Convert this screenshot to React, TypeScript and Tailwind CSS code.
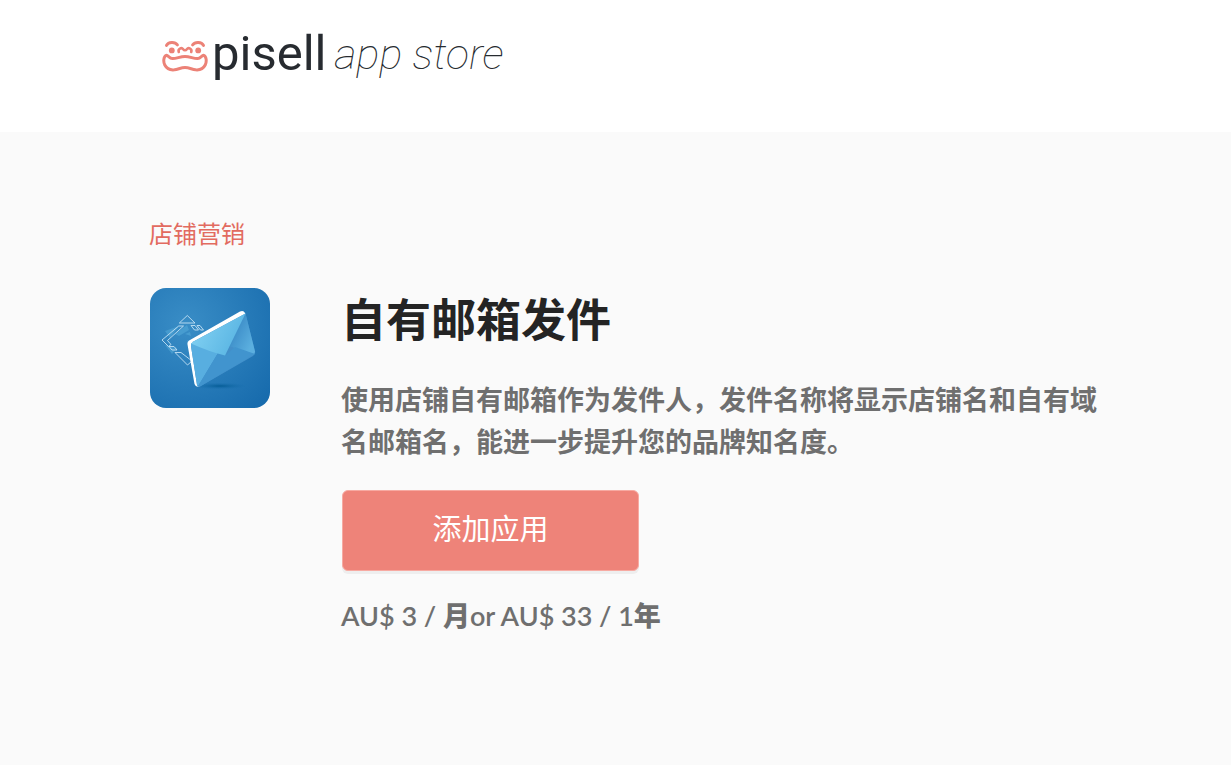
import React from 'react';

const app = {
  category: '店铺营销',
  name: '自有邮箱发件',
  description: '使用店铺自有邮箱作为发件人，发件名称将显示店铺名和自有域名邮箱名，能进一步提升您的品牌知名度。',
  monthly: 'AU$ 3',
  yearly: 'AU$ 33',
};

const PisellMark = () => (
  <svg width="46" height="36" viewBox="0 -4 46 36" fill="none" stroke="#ec8277" strokeWidth="3" strokeLinecap="round" strokeLinejoin="round" aria-hidden="true">
    <path d="M4.500 5.400C6.400 1.600 13 1.600 15.400 4.800" />
    <path d="M30.600 4.800C33 1.600 39.600 1.600 41.500 5.400" />
    <path d="M16.800 12C15.600 8.600 19.600 7.200 21.200 9.200C22.200 10.600 23.800 10.600 24.800 9.200C26.400 7.200 30.400 8.600 29.200 12" strokeWidth="2.6" />
    <circle cx="9.800" cy="10.400" r="2.900" fill="#ec8277" stroke="none" />
    <circle cx="36.200" cy="10.400" r="2.900" fill="#ec8277" stroke="none" />
    <path d="M4.200 15.400C6 14.800 7.200 18.400 10.400 18.600C14.400 18.800 18 16.400 23 16.400C28 16.400 31.600 18.800 35.600 18.600C38.800 18.400 40 14.800 41.800 15.400C44.600 16.600 44.800 21.800 43.200 25C41.200 28.800 37.400 30.200 33.600 29.800C29.600 29.200 27 27.600 23 27.600C19 27.600 16.400 29.200 12.400 29.800C8.600 30.200 4.800 28.800 2.800 25C1.200 21.800 1.400 16.600 4.200 15.400Z" />
  </svg>
);

const MailIcon = () => (
  <svg className="block size-[120px] rounded-2xl" viewBox="0 0 120 120" fill="none" role="img" aria-label={app.name}>
    <defs>
      <radialGradient id="bg" cx="0.3" cy="0.3" r="0.95">
        <stop stopColor="#398dc6" />
        <stop offset="1" stopColor="#166aac" />
      </radialGradient>
      <linearGradient id="flap" x1="50" y1="40" x2="90" y2="60" gradientUnits="userSpaceOnUse">
        <stop stopColor="#7ccdf0" />
        <stop offset="1" stopColor="#57b3e2" />
      </linearGradient>
      <linearGradient id="side" x1="78" y1="44" x2="102" y2="56" gradientUnits="userSpaceOnUse">
        <stop stopColor="#3787c4" />
        <stop offset="1" stopColor="#5bafdf" />
      </linearGradient>
      <radialGradient id="shadow">
        <stop stopColor="#055d96" />
        <stop offset="1" stopColor="#1a70b0" stopOpacity="0" />
      </radialGradient>
    </defs>
    <rect width="120" height="120" fill="url(#bg)" />
    <ellipse cx="70" cy="98" rx="28" ry="3.5" fill="url(#shadow)" />
    {/* arrows behind the envelope */}
    <g fill="#58aedb" fillOpacity="0.5">
      <path d="M15 43L29 38L20 50ZM25 46L37 37L39 42L29 48ZM15 57L27 60L22 66Z" />
      <path d="M35 46L40 44L41 48ZM37 52L42 56L38 57Z" />
    </g>
    <g stroke="#c3e1f4" strokeWidth="0.9" strokeLinejoin="round">
      <path d="M37.300 27.500L45 35H29.300Z" />
      <path d="M28.700 38L12 52L18.500 58.500L21 56.500L17.500 52.500L33.500 38Z" />
      <path d="M41 37.500H45L48.500 42H44.500ZM47 37.500H50L53.500 42H50.500ZM19 58.500H24L27 62H22Z" />
      <path d="M25 64.500L37.500 77L42 73L31 64.500Z" />
    </g>
    <path d="M37.500 56.500Q37 53.500 40 52L90 23.500Q93.500 22 95 25L96 28L50 98Q46 100 44.500 96Z" fill="#fff" />
    <path d="M41 58Q41 55 43.500 53.500L95.500 25.500L105 63.500Q105.500 66 103 68L50 98.500Q47.500 99.500 47 97Z" fill="#438fc9" />
    <path d="M95.500 25.500L105 63.500Q105 66 103 66L76 57Z" fill="url(#side)" />
    <path d="M41 58V55L68 65L48 98.500Q47 98.500 47 97Z" fill="#58aee0" />
    <path d="M68 65L76 67L85 59L105 66L50 98.500L48 98Z" fill="#4194ce" />
    <path d="M41 55.500L43.500 53.500L95.500 25.500L75 67.500Q60 64 41 55.500Z" fill="url(#flap)" />
  </svg>
);

export default function App() {
  return (
    <div className="min-h-screen bg-[#fafafa] font-['Open_Sans','Noto_Sans_CJK_SC',sans-serif] text-[#6f6f6f]">
      {/* Header */}
      <header className="h-[132px] bg-white pl-[162px] pt-6">
        <a href="#" className="inline-flex items-center font-[Roboto,sans-serif] leading-[60px] text-[#272b30]">
          <PisellMark />
          <span className="ml-1 text-[49px]">pisell</span>
          <span className="ml-2 text-[43px] font-thin italic">app store</span>
        </a>
      </header>

      {/* App details */}
      <main className="pb-16 pl-[149px] pr-[120px] pt-[84px]">
        <a href="#" className="block w-fit text-2xl leading-9 text-[#e26b60]">{app.category}</a>

        <div className="mt-9 flex items-start gap-[71px] pl-px">
          <div className="shrink-0">
            <MailIcon />
          </div>
          <section className="min-w-0 flex-1">
            <h1 className="text-[45px] leading-[64px] font-bold text-[#242424]">{app.name}</h1>
            <p className="mt-[27px] text-[27px] leading-[42px] font-bold">{app.description}</p>
            <button
              type="button"
              className="ml-px mt-[27px] block h-[81px] w-[297px] rounded-md border border-[#f7aaa2] bg-[#ee8379] pb-1 text-[29px] font-normal text-white shadow-[0_3px_0_#eeeeee]"
            >
              添加应用
            </button>
            <p className="mt-6 font-[Lato,'Noto_Sans_CJK_SC',sans-serif] text-[27px] leading-[42px] font-semibold">
              {app.monthly} / <b>月</b>or {app.yearly} / 1<b>年</b>
            </p>
          </section>
        </div>
      </main>
    </div>
  );
}
